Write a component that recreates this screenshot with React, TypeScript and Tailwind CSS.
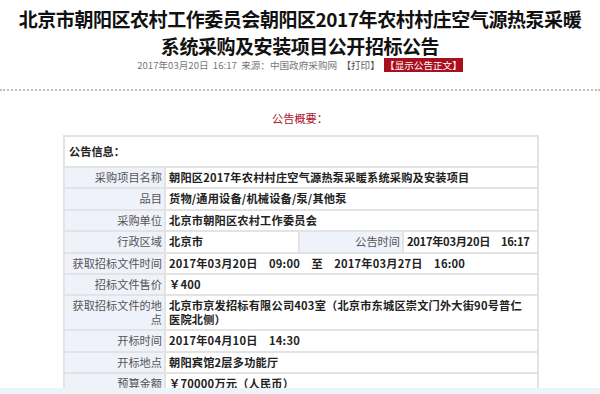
import React from "react";

const font = { fontFamily: '"Noto Sans CJK SC", "Noto Sans", sans-serif' };

function Label({ children, className = "" }: { children: React.ReactNode; className?: string }) {
  return (
    <td
      className={`border-2 border-[#e3e3e3] bg-[#eff1fb] text-right align-middle text-[#555] font-normal pl-[2px] pr-[2px] py-[3px] ${className}`}
    >
      {children}
    </td>
  );
}

function Value({
  children,
  colSpan,
  className = "tracking-[0.2px]",
}: {
  children: React.ReactNode;
  colSpan?: number;
  className?: string;
}) {
  return (
    <td
      colSpan={colSpan}
      className={`border-2 border-[#e3e3e3] bg-white text-left align-middle text-[#222] font-bold whitespace-nowrap pl-[3px] pr-[2px] py-[3px] ${className}`}
    >
      {children}
    </td>
  );
}

export default function App() {
  return (
    <div className="relative w-[600px] h-[394px] overflow-hidden bg-white" style={font}>
      <h1 className="pt-[5px] text-center text-[19px] tracking-[-0.45px] leading-[27px] font-bold text-[#111] whitespace-nowrap">
        北京市朝阳区农村工作委员会朝阳区2017年农村村庄空气源热泵采暖
        <br />
        系统采购及安装项目公开招标公告
      </h1>
      <div className="mt-[1px] text-center text-[9.6px] leading-[11px] text-[#777] whitespace-nowrap">
        2017年03月20日&nbsp;&nbsp;16:17&nbsp;&nbsp;来源：中国政府采购网&nbsp;&nbsp;
        <span className="text-[#555]">【打印】</span>&nbsp;&nbsp;
        <span className="bg-[#a8101e] text-white px-[1px]">【显示公告正文】</span>
      </div>
      <div className="mt-[18px] border-b-2 border-dotted border-[#bdbdbd]" />
      <div className="mt-[20px] text-center text-[11.2px] leading-[14px] text-[#a8112a]">公告概要：</div>
      <div className="mt-[10px] pl-[63px]">
        <table className="w-[474px] table-fixed border-collapse text-[11.2px] leading-[13.4px]">
          <colgroup>
            <col className="w-[101px]" />
            <col className="w-[134px]" />
            <col className="w-[104px]" />
            <col className="w-[135px]" />
          </colgroup>
          <tbody>
            <tr>
              <td colSpan={4} className="border-2 border-[#e3e3e3] h-[31px] pl-[4px] text-left font-bold text-[#222]">
                公告信息：
              </td>
            </tr>
            <tr>
              <Label>采购项目名称</Label>
              <Value colSpan={3}>朝阳区2017年农村村庄空气源热泵采暖系统采购及安装项目</Value>
            </tr>
            <tr>
              <Label>品目</Label>
              <Value colSpan={3}>货物/通用设备/机械设备/泵/其他泵</Value>
            </tr>
            <tr>
              <Label>采购单位</Label>
              <Value colSpan={3}>北京市朝阳区农村工作委员会</Value>
            </tr>
            <tr>
              <Label>行政区域</Label>
              <Value>北京市</Value>
              <Label>公告时间</Label>
              <Value className="tracking-[-0.3px]">2017年03月20日　16:17</Value>
            </tr>
            <tr>
              <Label>获取招标文件时间</Label>
              <Value colSpan={3}>2017年03月20日　09:00　至　2017年03月27日　16:00</Value>
            </tr>
            <tr>
              <Label>招标文件售价</Label>
              <Value colSpan={3}>￥400</Value>
            </tr>
            <tr>
              <Label>
                获取招标文件的地
                <br />
                点
              </Label>
              <Value colSpan={3}>
                北京市京发招标有限公司403室（北京市东城区崇文门外大街90号普仁
                <br />
                医院北侧）
              </Value>
            </tr>
            <tr>
              <Label>开标时间</Label>
              <Value colSpan={3}>2017年04月10日　14:30</Value>
            </tr>
            <tr>
              <Label>开标地点</Label>
              <Value colSpan={3}>朝阳宾馆2层多功能厅</Value>
            </tr>
            <tr>
              <Label>预算金额</Label>
              <Value colSpan={3}>￥70000万元（人民币）</Value>
            </tr>
          </tbody>
        </table>
      </div>
      <div className="absolute bottom-0 left-0 right-0 h-[6px] bg-[#eef3f8]" />
    </div>
  );
}
